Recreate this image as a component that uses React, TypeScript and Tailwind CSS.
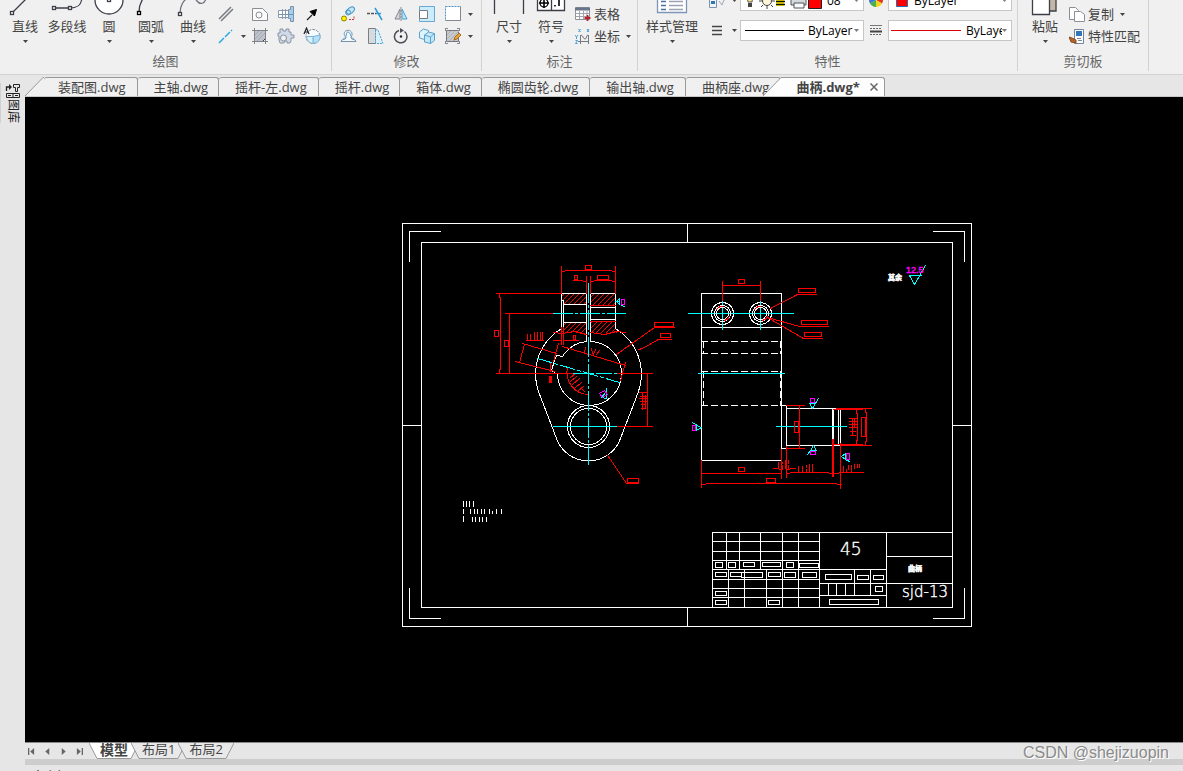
import type { ReactNode } from "react";
import clsx from "clsx";

const INK = "#3c3f48";

function Caret({ className }: { className?: string }) {
  return (
    <svg width="5" height="3" viewBox="0 0 5 3" className={clsx("shrink-0", className)} fill="#444">
      <path d="M0 0h5L2.5 3z" />
    </svg>
  );
}

/* ---------- ribbon building blocks ---------- */

function Group({
  title,
  className,
  children,
}: {
  title: string;
  className?: string;
  children: ReactNode;
}) {
  return (
    <section
      aria-label={title}
      className={clsx("flex h-full shrink-0 flex-col justify-end border-r border-[#d2d2d2]", className)}
    >
      <div className="flex shrink-0 items-end pl-1">{children}</div>
      <h2 className="h-6 shrink-0 pt-[5px] text-center leading-[18px] text-[#666]">{title}</h2>
    </section>
  );
}

function BigButton({
  label,
  wide,
  caret = true,
  children,
}: {
  label: string;
  wide?: boolean;
  caret?: boolean;
  children: ReactNode;
}) {
  return (
    <button type="button" className={clsx("flex shrink-0 flex-col items-center", wide ? "w-14" : "w-[42px]")}>
      <svg
        width={wide ? 56 : 42}
        height="32"
        viewBox={wide ? "0 0 56 32" : "0 0 42 32"}
        fill="none"
        stroke={INK}
        strokeWidth="1.3"
      >
        {children}
      </svg>
      <span className="h-[18px] leading-[18px] whitespace-nowrap">{label}</span>
      <span className="flex h-3 items-center">{caret && <Caret />}</span>
    </button>
  );
}

function Tool({ name, children }: { name: string; children: ReactNode }) {
  return (
    <button type="button" aria-label={name} className="flex h-[22px] w-[26px] items-center justify-center">
      <svg width="18" height="18" viewBox="0 0 18 18" fill="none" stroke={INK} strokeWidth="1">
        {children}
      </svg>
    </button>
  );
}

function MenuButton({ name }: { name: string }) {
  return (
    <button type="button" aria-label={name} className="flex h-[22px] w-2 items-center justify-center">
      <Caret />
    </button>
  );
}

function TextTool({ label, caret, children }: { label: string; caret?: boolean; children: ReactNode }) {
  return (
    <button type="button" className="flex h-[22px] items-center">
      <svg width="16" height="16" viewBox="0 0 16 16" fill="none" stroke={INK}>
        {children}
      </svg>
      <span className="ml-[3px] leading-[18px] whitespace-nowrap">{label}</span>
      {caret && <Caret className="ml-1.5" />}
    </button>
  );
}

function Combo({ name, options, children }: { name: string; options: string[]; children: ReactNode }) {
  return (
    <label className="flex h-[21px] w-[124px] items-center overflow-hidden border border-[#c6c6c6] bg-white pr-1 pl-1">
      {children}
      <select aria-label={name} className="min-w-0 flex-1 appearance-none bg-transparent p-0 text-xs text-black">
        {options.map((o) => (
          <option key={o}>{o}</option>
        ))}
      </select>
      <Caret className="opacity-70" />
    </label>
  );
}

/* ---------- ribbon ---------- */

function DrawGroup() {
  return (
    <Group title="绘图" className="w-[332px]">
      <BigButton label="直线">
        <path d="M9 27 33 3" />
        <rect x="6.500" y="26.500" width="3" height="3" fill="#fff" />
      </BigButton>
      <BigButton label="多段线" caret={false}>
        <path d="M8 23h16c8 0 12-3 12-12" />
        <rect x="6.500" y="21.500" width="3" height="3" fill="#fff" />
        <rect x="22.500" y="21.500" width="3" height="3" fill="#fff" />
      </BigButton>
      <BigButton label="圆">
        <circle cx="21" cy="15" r="14" fill="#fff" />
        <rect x="19.500" y="13.500" width="3" height="3" fill="#fff" />
      </BigButton>
      <BigButton label="圆弧">
        <path d="M9 27c0-8 4-18 16-23" />
        <rect x="7.500" y="26.500" width="3" height="3" fill="#fff" stroke="#000" />
      </BigButton>
      <BigButton label="曲线">
        <path d="M8 28c0-6 3-13 8-15 5-2 7 0 9 3 3 4 8 3 9-3" stroke="#70737b" />
        <rect x="6.500" y="27.500" width="3" height="3" fill="#fff" />
      </BigButton>
      <div className="-ml-px flex">
        <div>
          <Tool name="双线">
            <path d="M2 14 14 2M4 16 16 4" stroke="#777b80" strokeWidth="1.500" />
          </Tool>
          <div className="flex">
            <Tool name="构造线">
              <path d="M2 16 15 3" stroke="#29abe2" strokeWidth="1.500" strokeDasharray="7 1.500" />
            </Tool>
            <MenuButton name="更多构造线" />
          </div>
        </div>
        <div className="grid grid-cols-[26px_26px_26px]">
          <Tool name="面域">
            <path d="M1.500 3.500h10l5 5v7h-15z" fill="#fbfbfb" stroke="#8a8d92" />
            <circle cx="8" cy="10" r="3" stroke="#8a8d92" />
          </Tool>
          <Tool name="轴">
            <path d="M1.500 5.500h10v7h-10zM5.500 4v10M8.500 4v10" fill="#fff" stroke="#8a9ab0" />
            <path d="M11.500 4.500h2v-3h3v15h-3v-3h-2z" fill="#a9cdea" stroke="#7893ad" />
            <path d="M1 9.500h16" stroke="#7893ad" />
          </Tool>
          <Tool name="引线箭头">
            <path d="M4 15 9 10" stroke="#222" strokeWidth="1.300" />
            <path d="M13.500 4.500 11.500 11 7 6.500z" fill="#000" stroke="#000" />
          </Tool>
          <Tool name="填充">
            <path d="M3.500 3.500h11v8l-3 3h-8z" fill="#bfc3cc" />
            <path d="M4 8l4-4M4 12l8-8M6 14l8-8" stroke="#a3a7b0" />
            <path d="M1 3.500h16M3.500 1v16M14.500 1v16M1 14.500h16" stroke="#80838a" />
          </Tool>
          <Tool name="齿轮">
            <path
              d="M3 6V2h3v2h3V2h3v3h2v3h3v3h-3v3l-1 2h-3v-2H8l-1 2H3l-1-3V9H1V6z"
              fill="#cfd9e8"
              stroke="#8b93a2"
            />
            <circle cx="6.500" cy="11" r="3" fill="#f0f0f0" stroke="#8b93a2" />
          </Tool>
          <Tool name="局部放大">
            <circle cx="10" cy="9.500" r="7" fill="#f6fbff" stroke="#858a92" strokeDasharray="3 1" />
            <path d="M10 9.500 17 8a7 7 0 0 1-7 8.500z" fill="#b3e2f8" stroke="#7fb4d4" />
            <path d="M10 9.500H3.500a7 7 0 0 0 6.500 7z" fill="#d9f1fc" stroke="#7fb4d4" />
            <path d="M1 7 3.500 1 6 7M2 5h3" stroke="#222" strokeWidth="1.200" />
          </Tool>
        </div>
      </div>
    </Group>
  );
}

function ModifyGroup() {
  return (
    <Group title="修改" className="w-[150px]">
      <div className="grid grid-cols-[26px_26px_26px_26px_26px_8px]">
        <Tool name="复制对象">
          <circle cx="4" cy="13.500" r="2.500" fill="#ffee00" stroke="#8b8400" />
          <ellipse cx="10.500" cy="5.500" rx="4.500" ry="2.800" fill="#bfe6fa" stroke="#4593c4" transform="rotate(-40 10.500 5.500)" />
          <circle cx="8" cy="7.500" r="2.500" stroke="#4593c4" />
          <path d="M9 14.500h5v-4" stroke="#c33" strokeDasharray="2 1" />
        </Tool>
        <Tool name="延伸">
          <path d="M1 8.500h9" stroke="#555" strokeWidth="1.500" strokeDasharray="3 1" />
          <path d="M10 8.500h5M9 3l7 12" stroke="#2f9bd8" strokeWidth="1.500" />
        </Tool>
        <Tool name="镜像">
          <path d="M8 4v10H3z" fill="#d4d6da" stroke="#85888f" />
          <path d="M10 4v10h5z" fill="#b8e4f8" stroke="#4f9dcc" />
          <path d="M9 2v15" stroke="#888" strokeDasharray="2 1" />
        </Tool>
        <Tool name="缩放">
          <path d="M1.500 1.500h15v15h-15z" fill="#cbecfb" stroke="#6ba8cf" />
          <path d="M1.500 5.500h8v8h-8z" fill="#fff" stroke="#777b84" />
        </Tool>
        <Tool name="拉伸">
          <path d="M1.500 1.500h15v14h-15z" fill="#fff" stroke="#4593c4" strokeDasharray="2 1" />
          <path d="M1.500 15.500h15v-14" stroke="#85888f" />
        </Tool>
        <MenuButton name="更多拉伸" />
        <Tool name="偏移">
          <path d="M1 14.500h15c0-3-5-1-5-4 3-5-1-8-4-7-4 1-3 5-1 7 0 3-5 1-5 4z" fill="#f5f9fc" stroke="#7893ad" />
          <path d="M3 12c5-1 2-7 5-7s2 6 6 7" stroke="#5a9fcb" />
        </Tool>
        <Tool name="倒角">
          <path d="M2.500 1.500h7v15h-7z" fill="#d9dadd" stroke="#7b7e86" />
          <path d="M9.500 2.500 12 3l5 13.500H9.500z" fill="#d6f0fc" stroke="#56a0ca" strokeDasharray="2 1" />
        </Tool>
        <Tool name="旋转">
          <path d="M7 3.500A6.300 6.300 0 1 0 12.500 4.500" stroke="#4c4f57" strokeWidth="1.500" />
          <path d="M8 1v5l4-2.500z" fill="#4c4f57" stroke="none" />
          <circle cx="9" cy="9.500" r="1.200" fill="#222" stroke="none" />
        </Tool>
        <Tool name="阵列">
          <path d="M1.500 5l4-3 5 1.500v6l-4 3-5-1.500z" fill="#dff3fc" stroke="#5aa2ce" />
          <path d="M6.500 8l4-3 6 1.500v7l-4 3-6-1.500zM6.500 8l6 2v6.500M12.500 10l4-3.500" fill="#c2e7f8" stroke="#5aa2ce" />
        </Tool>
        <Tool name="编辑填充">
          <path d="M2.500 3.500h12v11h-12z" fill="#c9cacd" stroke="#74777e" />
          <path d="M3 8l4-4M3 12l8-8M5 14 15 4M9 14l6-6" stroke="#aeb0b5" />
          <path d="M1 1.500h3M1.500 1v3M1 16.500h3M1.500 14v3M13 1.500h3M15.500 1v3M13 16.500h3M15.500 14v3" stroke="#85888f" />
          <path d="M10 13l1-3 4-4 2 2-4 4z" fill="#e7a33e" stroke="#a86c1d" />
        </Tool>
        <MenuButton name="更多编辑" />
      </div>
    </Group>
  );
}

function DimensionGroup() {
  return (
    <Group title="标注" className="w-[156px]">
      <div className="flex items-end pl-0.5">
        <BigButton label="尺寸">
          <path d="M6.500 4v25M35.500 4v25M7 10h28" />
        </BigButton>
        <BigButton label="符号">
          <path d="M7.500 6.500h27v19h-27zM21.500 7v18" fill="#fff" />
          <circle cx="14" cy="18" r="4" stroke="#000" />
          <path d="M14 11v12M9 18h10M29 12v9M25 20v1.500" stroke="#000" strokeWidth="1.600" />
        </BigButton>
        <div className="ml-[3px]">
          <TextTool label="表格">
            <path d="M.5 1.500h14v12H.5z" fill="#fff" stroke="#8d929b" />
            <path d="M.5 2h14v2H.5z" fill="#687487" stroke="#687487" />
            <path d="M.5 7.500h14M.5 10.500h14M4.500 5v8M8.500 5v8M12 5v8" stroke="#a0a5ad" />
            <path d="M12.500 9v6M9.500 12h6" stroke="#b9202c" strokeWidth="1.800" />
          </TextTool>
          <TextTool label="坐标" caret>
            <path d="M5.500 7v9M3 13.500h11M13.500 7v9M6 7c2 0 2 4 4 4s1-4 3-4" stroke="#74787f" />
            <path d="M3.500 1l2 3M5.500 1l-2 3M12 1l2 3M14 1l-2 3M0 7l1.500 2L3 7M1.500 9v2M.5 12.500h2l-2 3h2" stroke="#4d9fd0" />
          </TextTool>
        </div>
      </div>
    </Group>
  );
}

function PropertyGroup() {
  return (
    <Group title="特性" className="w-[380px]">
      <div className="flex items-end pl-0.5">
        <BigButton label="样式管理" wide>
          <path d="M13.500 6.500h29v21h-29z" fill="#fff" stroke="#7d95b8" />
          <path d="M17 12.500h5M17 16.500h5M17 20.500h5M17 24.500h5" stroke="#4f6f9f" />
          <path d="M25 12.500h14M25 16.500h14M25 20.500h14M25 24.500h14" stroke="#9aa3b3" />
        </BigButton>
        <div className="ml-1 flex flex-col gap-2 pb-1.5">
          <div className="flex h-[22px] items-center">
            <Tool name="图层管理">
              <path d="M1.500 8.500h7v8h-7z" fill="#eef3f9" stroke="#8193ab" />
              <path d="M3 10h4v3H3z" fill="#2e77b5" stroke="none" />
              <path d="M11 10l3 4 2-5M10 7h6" stroke="#9fa9b8" />
            </Tool>
            <Caret className="ml-0.5" />
          </div>
          <div className="flex h-[22px] items-center">
            <Tool name="线宽">
              <path d="M4 5.500h10M4 9.500h10M4 13.500h10" stroke="#444" strokeWidth="1.300" />
            </Tool>
            <Caret className="ml-0.5" />
          </div>
        </div>
        <div className="ml-[3px] flex flex-col gap-[9px] pb-1.5">
          <Combo name="图层" options={["08"]}>
            <svg width="82" height="21" viewBox="0 0 82 21" fill="none" className="shrink-0">
              <path d="M1 5c0-6 8-6 8 0 0 3-2 4-2 7H3c0-3-2-4-2-7z" fill="#ffe88a" stroke="#555" />
              <path d="M3 13h4v4H3z" fill="#444" />
              <circle cx="22" cy="11" r="4.500" fill="#fff6d8" stroke="#444" />
              <path d="M22 3v3M22 16v3M14 11h3M27 11h3M16 5l2 2M26 15l2 2M16 17l2-2M26 7l2-2" stroke="#444" />
              <path d="M31 7h8v9h-8z" fill="#ffee00" />
              <path d="M31 8.500h9M31 11.500h9M31 14.500h9" stroke="#111" strokeWidth="1.500" />
              <path d="M46 6h15v9H46z" fill="#d4dbe0" stroke="#555" />
              <path d="M49 13h10v5H49z" fill="#f7fbff" stroke="#555" />
              <path d="M63.500 3.500h13v15h-13z" fill="#f00" stroke="#222" />
            </svg>
          </Combo>
          <Combo name="线型" options={["ByLayer"]}>
            <svg width="63" height="1" className="shrink-0">
              <path d="M0 .5h59" stroke="#000" />
            </svg>
          </Combo>
        </div>
        <div className="flex flex-col gap-2 pb-1.5">
          <Tool name="颜色">
            <g transform="translate(8 9)" stroke="none">
              <circle r="7" fill="#e8ecef" />
              <path d="M0 0V-7A7 7 0 0 1 6 -3.500z" fill="#f5d21b" />
              <path d="M0 0 6-3.500A7 7 0 0 1 6 3.500z" fill="#e2361e" />
              <path d="M0 0 6 3.500A7 7 0 0 1 0 7z" fill="#f5d21b" />
              <path d="M0 0V7A7 7 0 0 1-6 3.500z" fill="#49b14b" />
              <path d="M0 0-6 3.500A7 7 0 0 1-6-3.500z" fill="#3c78d0" />
              <path d="M0 0-6-3.500A7 7 0 0 1 0-7z" fill="#f07a1d" />
            </g>
          </Tool>
          <Tool name="线型管理">
            <path d="M2 4.500h12" stroke="#777" />
            <path d="M2 7.500h12M2 13.500h12" stroke="#666" strokeDasharray="2 1" />
            <path d="M2 10.500h12" stroke="#444" strokeWidth="2" />
          </Tool>
        </div>
        <div className="-ml-0.5 flex flex-col gap-[9px] pb-1.5">
          <Combo name="颜色" options={["ByLayer"]}>
            <svg width="21" height="17" viewBox="0 0 21 17" className="shrink-0">
              <path d="M3.500 3.500h11v11h-11z" fill="#f00" stroke="#2a6bb0" />
            </svg>
          </Combo>
          <Combo name="线宽" options={["ByLayer"]}>
            <svg width="70" height="1" className="-ml-0.5 shrink-0">
              <path d="M0 .5h70" stroke="#e00000" />
            </svg>
            <span className="w-[5px] shrink-0" />
          </Combo>
        </div>
      </div>
    </Group>
  );
}

function ClipboardGroup() {
  return (
    <Group title="剪切板" className="w-[131px]">
      <div className="flex items-end pl-0.5">
        <BigButton label="粘贴">
          <path d="M20 4h12v22H20z" fill="#c3b8a8" />
          <path d="M8.500 4.500h17v25h-17z" fill="#fff" />
        </BigButton>
        <div className="ml-[3px]">
          <TextTool label="复制" caret>
            <path d="M.5 1.500h6l3 3v9h-9z" fill="#fff" stroke="#8c9096" />
            <path d="M5.500 5.500h6l4 3v7h-10z" fill="#fff" stroke="#8c9096" />
          </TextTool>
          <TextTool label="特性匹配">
            <path d="M5.500 1.500h9v14h-9z" fill="#fff" stroke="#74839a" />
            <path d="M7 3h6v5H7z" fill="#2f77b8" stroke="none" />
            <path d="M8 10.500h4M9 12.500h4" stroke="#7a8797" />
            <path d="M0 9l3 1 4 2v3l-5-1z" fill="#b0662a" stroke="#8a4c1b" />
          </TextTool>
        </div>
      </div>
    </Group>
  );
}

/* ---------- file tabs ---------- */

const files = ["装配图", "主轴", "摇杆-左", "摇杆", "箱体", "椭圆齿轮", "输出轴", "曲柄座"];

function FileTabs() {
  return (
    <nav className="flex h-[22px] shrink-0 items-end overflow-hidden border-b border-[#c8c8c8] bg-[#e6e6e6]">
      <svg width="19" height="19" viewBox="0 0 19 19" className="shrink-0">
        <path d="M0 19 18 .5h1V19z" fill="#f0f0f0" />
        <path d="M0 19 18 .5h1" fill="none" stroke="#999" />
      </svg>
      {files.map((f, i) => (
        <button
          key={f}
          type="button"
          className={clsx(
            "h-[19px] shrink-0 rounded-t-[3px] border-t border-r border-[#999] bg-[#f0f0f0] leading-[18px] whitespace-nowrap",
            f.length > 2 ? "pr-[11px]" : "pr-2.5",
            i === 0 ? "pl-[14px]" : "pl-4"
          )}
        >
          {f}.dwg
        </button>
      ))}
      <svg width="20" height="19" viewBox="0 0 20 19" className="z-10 -ml-[19px] shrink-0">
        <path d="M1 19 19 .5h1V19z" fill="#fdfdfd" />
        <path d="M1 19 19 .5h1" fill="none" stroke="#999" />
      </svg>
      <div className="flex h-[19px] shrink-0 items-center rounded-tr-[3px] border-t border-r border-[#999] bg-[#fdfdfd] pr-1.5 pl-[14px]">
        <button type="button" className="leading-[18px] font-bold whitespace-nowrap">
          曲柄.dwg*
        </button>
        <button type="button" aria-label="关闭" className="ml-2.5">
          <svg width="8" height="8" viewBox="0 0 8 8" stroke="#666" strokeWidth="1.500">
            <path d="M.5.5l7 7M7.500.5l-7 7" />
          </svg>
        </button>
      </div>
    </nav>
  );
}

/* ---------- drawing sheet ---------- */

type Box = [number, number, number, number];

const titleBoxes: Box[] = [
  [715, 562, 7, 5], [728, 562, 7, 5], [743, 562, 11, 4], [762, 562, 18, 4], [786, 562, 7, 5], [799, 563, 19, 4],
  [715, 572, 11, 4], [730, 572, 11, 4], [741, 572, 21, 5], [768, 572, 12, 4], [784, 572, 11, 5], [802, 572, 14, 5],
  [715, 591, 11, 4], [715, 600, 11, 4], [768, 600, 11, 4],
  [825, 574, 26, 5], [857, 575, 11, 4], [873, 575, 10, 4], [875, 586, 7, 5], [829, 599, 49, 5],
];

const dimBoxes: Box[] = [
  [585, 265, 6, 4], [574, 275, 3, 4], [597, 275, 11, 4], [494, 330, 4, 6], [504, 340, 4, 6], [573, 335, 2, 4],
  [654, 322, 19, 4], [660, 333, 10, 4], [627, 478, 11, 4],
  [738, 279, 6, 4], [798, 288, 17, 4], [801, 320, 26, 4], [804, 332, 17, 4],
  [794, 421, 4, 11], [738, 467, 6, 4], [766, 478, 9, 4], [861, 417, 4, 19],
];

const roughBoxes: Box[] = [
  [621, 299, 3, 5], [810, 398, 4, 4], [810, 451, 5, 3], [846, 453, 3, 6], [692, 425, 3, 5],
];

// 45° section lines across the clamp, 5 units apart
const hatchLines = Array.from({ length: 20 }, (_, i) => 548 + i * 5);

function Boxes({ items }: { items: Box[] }) {
  return (
    <>
      {items.map(([x, y, w, h]) => (
        <rect key={`${x}-${y}`} x={x} y={y} width={w} height={h} />
      ))}
    </>
  );
}

function Sheet() {
  return (
    <svg
      viewBox="25 97 1158 645"
      className="h-full w-full"
      fill="none"
      shapeRendering="crispEdges"
      strokeLinecap="square"
    >
      <defs>
        <clipPath id="section">
          <path d="M562 294h24v10h-24zM591 294h24v11h-24zM564 323h22v10h-32l10-6zM591 322h24v5l8 6h-32z" />
        </clipPath>
      </defs>
      <g stroke="#f00" clipPath="url(#section)">
        {hatchLines.map((x) => (
          <path key={x} d={`M${x} 305l12-12M${x - 8} 334l14-14`} />
        ))}
      </g>
      <g transform="translate(.5 .5)">
        {/* frame */}
        <g stroke="#fff">
          <path d="M402 223h569v403H402zM421 242h531v365H421z" />
          <path d="M409 261v-30h31M933 231h31v30M409 588v30h31M933 618h31v-30" />
          <path d="M687 223v19M687 607v19M402 425h19M952 425h19" />
          {/* technical notes */}
          <path d="M463 501v5M466 501v5M469 501v5M473 501v5M463 509v4M470 509v4M474 509v4M477 509v4M481 509v4M484 509v4M489 509v4M492 511v2M496 509v4M501 509v4M463 516v5M472 517v4M475 517v4M479 517v4M482 517v4M486 517v4" />
        </g>

        {/* title block */}
        <g stroke="#fff">
          <path d="M712 607v-75h240M819 532v75M886 532v75" />
          <path d="M726 532v37M739 532v37M760 532v37M782 532v75M798 532v75M728 569v38M744 569v38M766 569v38" />
          <path d="M712 541h107M712 551h107M712 560h107M712 569h174M712 579h107M712 588h107M712 597h107" />
          <path d="M819 583h133M819 595h67M886 556h66M854 569v26M870 569v26M828 583v12M836 583v12M845 583v12" />
          <Boxes items={titleBoxes} />
        </g>

        {/* front view */}
        <g stroke="#fff">
          <path d="M586 341v-48h-25v35A53 53 0 0 0 538 391L556 438A34 34 0 0 0 620 438L638 391A53 53 0 0 0 615 328v-35h-25v48" />
          <path d="M561 300h2v27M563 304h23M563 322h23M590 307h25M590 319h25" />
          <path d="M590 341A32 32 0 1 1 557 374l-6-4 3-10 2-5 6 1 2-3A32 32 0 0 1 586 341" />
          <circle cx="588" cy="426" r="21" />
          <circle cx="588" cy="426" r="18" />
        </g>
        <g stroke="#f00">
          <path d="M561 293v-27M615 293v-27M561 271h3l1-1h46l1 1h3M586 293v-17M590 293v-17M573 280h9l1 1h3M590 281h3l1-1h17l1 1h3" />
          <path d="M496 293h65M499 293v4h1v72h-1v4M505 313h48M509 313v60M496 373h77M616 373h36M616 426h36M647 373v53" />
          <path d="M590 305h25M590 321h25M553 332l9 1 12-2 12 3M590 332l14 2 12-3 9 1M561 327v17M563 327v17" />
          <path d="M526 340h17M553 340h7M564 340h14M527 334v5M530 334v5M534 332v7M537 332v8M540 332v8M542 332v8" />
          <path d="M522 343l34 10M515 361l39 10M524 344l-5 18M562 346l63 19M625 362l-5 18M558 343l-5 18M550 363v8M550 376v6" />
          <path d="M549 376h2v6h-2z" fill="#f00" />
          <path d="M567 367A22 22 0 0 0 588 394M570 377l5-4M570 381l6-5M572 384l7-6M575 387l6-5M578 390l5-4M584 391l-3-3" />
          <path d="M585 347l-1 5M591 348l1 5M595 349l-2 5M599 350l-3 4" />
          <path d="M639 392h8M640 396h7M639 398h8M640 401h7M641 404h4M641 408h4M642 392v17M645 395v13" />
          <path d="M616 354l38-27h20M638 349l4-1 16-9h13M607 455l3 4 16 24h12" />
        </g>
        <g stroke="#0ff">
          <path d="M553 313h72" strokeDasharray="19 3 2 3" />
          <path d="M588 283v181" strokeDasharray="19 3 2 3" />
          <path d="M573 373h43" strokeDasharray="15 3 2 3" />
          <path d="M553 426h63" />
          <path d="M537 358l82 24" strokeDasharray="15 3 3 3" />
          <path d="M615 301h3M619 298v6l-3-3 3-3M621 305l3 1" />
          <path d="M606 388v10l-5-1 5-6" />
        </g>
        <path d="M599 393l5-3 3 4-5 3z" stroke="#f0f" />

        {/* side view */}
        <g stroke="#fff">
          <path d="M701 293h80v167h-80zM701 327h80" />
          <circle cx="722" cy="313" r="11" />
          <circle cx="760" cy="313" r="11" />
          <path d="M701 341h80M701 353h80M701 371h80M701 405h80" strokeDasharray="6 4" />
          <path d="M703 341v12M780 341v12M703 371v34M780 371v34" strokeDasharray="6 4" />
          <path d="M781 405h5v43h-5M786 408h50M786 445h54M838 409v34M840 409v34M832 408v31M833 408v31" />
        </g>
        <g stroke="#0ff">
          <path d="M698 373h86M688 313h105M722 301v28M760 301v28M776 426h70" />
          <path d="M809 403l3 5 6-10M809 403h6M810 450l3-5 3 5zM810 450l-3 4M841 456l4-3v6zM845 459l4 2M701 427l-5-2v5zM697 425l-5-3" />
        </g>
        <g stroke="#fff">
          <circle cx="722" cy="313" r="8" />
          <circle cx="722" cy="313" r="6" />
          <circle cx="760" cy="313" r="8" />
          <circle cx="760" cy="313" r="6" />
        </g>
        <g stroke="#f00">
          <path d="M722 300v-19M760 300v-19M722 285h38M770 308l27-14h19M767 317l32 9h29M767 317l36 21h19" />
          <path d="M716 309a7 7 0 0 1 6-3M729 316a7 7 0 0 1-5 4M754 309a7 7 0 0 1 6-3M767 316a7 7 0 0 1-5 4" />
          <path d="M786 405h18M786 448h18M799 405v43M781 449v29M786 446v31M832 439v37M833 439v37M840 443v45M701 460v27" />
          <path d="M701 473h80M701 484h4l1-1h130l1 1h4M773 468h5l1 1h3M786 469h3l1-1h5M786 473h3l1-1h38l1 1h9l1-1h24" />
          <path d="M778 462v5M782 462v1M782 465v3M785 460v8M788 460v3M788 465v3M798 466v5M802 466v5M806 465v2M806 469v2M809 464v8M812 464v3M812 468v4" />
          <path d="M843 466v5M846 469v2M848 465v4M851 465v7M854 464v4M857 464v3M859 464v3" />
          <path d="M836 408h35M840 445h31M833 409h29M833 444h29M856 409v4h1v27h-1v4M865 408v4h1v29h-1v4" />
          <path d="M849 418h8M849 421h8M849 424h8M849 427h8M850 431h5M850 435h5M852 418v17M854 418v8" />
          <Boxes items={dimBoxes} />
        </g>
        <g stroke="#f0f">
          <Boxes items={roughBoxes} />
        </g>
        <path d="M909 275h12M909 275l5 9 11-19" stroke="#0ff" />
      </g>

      <g fill="#fff" className="font-['DejaVu_Sans_Light','DejaVu_Sans','Noto_Sans_CJK_SC',sans-serif]" fontWeight="200">
        <g stroke="#fff" strokeWidth=".4">
          <text x="840" y="555" fontSize="17">45</text>
          <text x="902" y="597" fontSize="15">sjd-13</text>
        </g>
        <g stroke="#fff" strokeWidth=".6" fontWeight="700">
          <text x="908" y="571" fontSize="7">曲柄</text>
          <text x="888" y="280" fontSize="7">其余</text>
        </g>
        <text x="906" y="273" fontSize="9" fill="#f0f" stroke="#f0f" strokeWidth=".4" className="font-['Liberation_Sans',sans-serif]">
          12.5
        </text>
      </g>
    </svg>
  );
}

/* ---------- layout tabs ---------- */

function NavButton({ name, d }: { name: string; d: string }) {
  return (
    <button type="button" aria-label={name} className="flex w-4 items-center pl-[3px]">
      <svg width="7" height="7" viewBox="0 0 8 8" fill="#666">
        <path d={d} />
      </svg>
    </button>
  );
}

function LayoutTab({ label, active }: { label: string; active?: boolean }) {
  return (
    <button type="button" className={clsx("flex h-4 shrink-0", !active && "-ml-2")}>
      <svg width="9" height="16" viewBox="0 0 9 16" fill={active ? "#fff" : "#e9e9e9"}>
        <path d="M0 0 8 15.500h1V0z" />
        <path d="M0 0 8 15.500h1" fill="none" stroke="#999" />
      </svg>
      <span
        className={clsx(
          "h-4 border-b border-[#999] px-0.5",
          active ? "bg-white text-sm leading-[13px] font-bold" : "bg-[#e9e9e9] leading-[13px]"
        )}
      >
        {label}
      </span>
      <svg width="9" height="16" viewBox="0 0 9 16" fill={active ? "#fff" : "#e9e9e9"}>
        <path d="M0 0v15.500h1L9 0z" />
        <path d="M0 15.500h1L9 0" fill="none" stroke="#999" />
      </svg>
    </button>
  );
}

export default function App() {
  return (
    <div className="relative flex h-screen flex-col overflow-hidden bg-[#e6e6e6] font-['Open_Sans','Noto_Sans_CJK_SC',sans-serif] text-[13px] text-[#444]">
      <header className="flex h-[75px] shrink-0 items-end overflow-hidden border-b border-[#d2d2d2] bg-[#f0f0f0] pb-[3px]">
        <DrawGroup />
        <ModifyGroup />
        <DimensionGroup />
        <PropertyGroup />
        <ClipboardGroup />
      </header>

      <div className="flex min-h-0 flex-1">
        <aside className="w-[25px] shrink-0 pt-2">
          <button type="button" className="flex w-6 flex-col items-center border-l border-[#d0d0d0]">
            <svg width="16" height="16" viewBox="0 0 16 16" fill="none" stroke="#222">
              <path d="M1.500 8V4h4" strokeWidth="1.300" />
              <path d="M4 1l3 3-3 3z" fill="#222" stroke="none" />
              <path d="M8.500 1.500h6v3h-2v4h-2v-4h-2zM1.500 10.500h13v4h-13zM8 10v5M3 12.500h3M10 12.500h3" />
            </svg>
            <span className="text-xs leading-4 text-[#222] [text-orientation:sideways] [writing-mode:vertical-rl]">
              图库
            </span>
          </button>
        </aside>

        <div className="flex min-w-0 flex-1 flex-col">
          <FileTabs />
          <main className="min-h-0 flex-1 bg-black">
            <Sheet />
          </main>
          <nav className="flex h-[17px] shrink-0 border-t border-[#888]">
            <NavButton name="首页" d="M0 0h1.500v8H0zM7 0v8L2.500 4z" />
            <NavButton name="上一页" d="M6 0v8L1.500 4z" />
            <NavButton name="下一页" d="M2 0v8l4.500-4z" />
            <NavButton name="末页" d="M6.500 0H8v8H6.500zM1 0v8l4.500-4z" />
            <LayoutTab label="模型" active />
            <LayoutTab label="布局1" />
            <LayoutTab label="布局2" />
          </nav>
          <div className="h-1.5 shrink-0 bg-[#cdcdcd]" />
          <footer className="h-1.5 shrink-0 overflow-hidden pt-[5px] pl-[7px] text-xs leading-[14px]">命令行</footer>
        </div>
      </div>

      <p className="pointer-events-none absolute right-3.5 bottom-[7px] font-['Liberation_Sans',sans-serif] text-base leading-[22px] text-[#8a8a8a] [text-shadow:1px_1px_0_#fff]">
        CSDN @shejizuopin
      </p>
    </div>
  );
}
